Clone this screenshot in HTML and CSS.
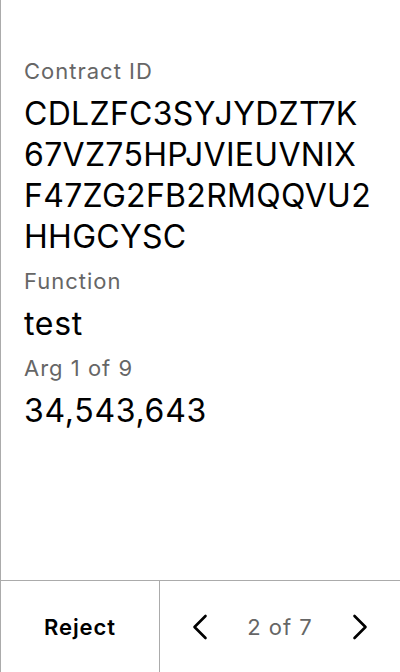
FILE: index.html
```html
<!DOCTYPE html>
<html>
<head>
<meta charset="utf-8">
<link rel="stylesheet" href="styles.css">
</head>
<body>
<div class="screen">
  <main class="details">
    <section class="field">
      <div class="label">Contract ID</div>
      <div class="value id"><span class="chunk">CDLZFC3SYJYDZT7K</span><span class="chunk">67VZ75HPJVIEUVNIX</span><span class="chunk">F47ZG2FB2RMQQVU2</span><span class="chunk">HHGCYSC</span></div>
    </section>
    <section class="field">
      <div class="label">Function</div>
      <div class="value">test</div>
    </section>
    <section class="field">
      <div class="label">Arg 1 of 9</div>
      <div class="value">34,543,643</div>
    </section>
  </main>
  <footer class="footer">
    <button class="reject">Reject</button>
    <nav class="pager">
      <button class="arrow" aria-label="Previous">
        <svg width="16" height="26" viewBox="0 0 16 26"><path d="M13.5 2 L2.5 13 L13.5 24" fill="none" stroke="#000" stroke-width="2.6" stroke-linecap="round" stroke-linejoin="round"/></svg>
      </button>
      <span class="count">2 of 7</span>
      <button class="arrow" aria-label="Next">
        <svg width="16" height="26" viewBox="0 0 16 26"><path d="M2.5 2 L13.5 13 L2.5 24" fill="none" stroke="#000" stroke-width="2.6" stroke-linecap="round" stroke-linejoin="round"/></svg>
      </button>
    </nav>
  </footer>
</div>
</body>
</html>
```
FILE: styles.css
```css
* { box-sizing: border-box; }
html, body {
  margin: 0;
  padding: 0;
  background: #fff;
}
body {
  font-family: Inter, "Noto Sans", sans-serif;
  color: #000;
}
.screen {
  width: 400px;
  height: 672px;
  display: flex;
  flex-direction: column;
  border-left: 1px solid #ababab;
}
.details {
  flex: 1;
  padding: 57px 23px 0 23px;
  display: flex;
  flex-direction: column;
  gap: 10px;
}
.field {
  display: flex;
  flex-direction: column;
  gap: 8px;
}
.label {
  font-size: 22px;
  line-height: 28px;
  letter-spacing: 1px;
  color: #666;
}
.value {
  font-size: 32px;
  line-height: 41px;
  letter-spacing: 0.7px;
  color: #000;
}
.id {
  letter-spacing: 0.3px;
}
.chunk {
  display: block;
}
.footer {
  height: 92px;
  border-top: 1px solid #ababab;
  display: flex;
}
.reject {
  width: 159px;
  border: 0;
  border-right: 1px solid #ababab;
  background: none;
  font-family: inherit;
  font-size: 22px;
  font-weight: 600;
  letter-spacing: 0.9px;
  color: #000;
  padding: 0;
}
.pager {
  flex: 1;
  display: flex;
  align-items: center;
  justify-content: center;
  gap: 35px;
}
.arrow {
  border: 0;
  background: none;
  padding: 0;
  width: 24px;
  height: 30px;
  display: flex;
  align-items: center;
  justify-content: center;
}
.count {
  font-size: 22px;
  letter-spacing: 1px;
  color: #666;
}
```
